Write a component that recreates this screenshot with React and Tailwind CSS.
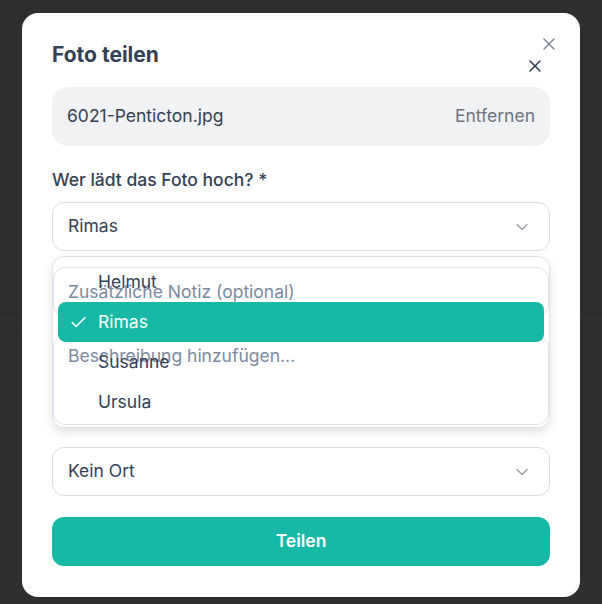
import { X, ChevronDown, Check } from 'lucide-react';

const people = ['Helmut', 'Rimas', 'Susanne', 'Ursula'];

function SelectBox({ value }) {
  return (
    <div className="h-[49px] flex items-center justify-between pl-[15px] pr-[17px] border border-[#dcdde3] rounded-xl bg-white text-[17.5px] text-[#334155]">
      <span>{value}</span>
      <ChevronDown size={20} strokeWidth={1.6} className="text-[#9aa1ad]" />
    </div>
  );
}

export default function App() {
  const selected = 'Rimas';

  return (
    <div
      className="relative w-[602px] h-[604px] bg-[#2f2f2f] overflow-hidden"
      style={{ fontFamily: 'Inter, "Noto Sans", sans-serif' }}
    >
      {/* faint backdrop rows */}
      <div className="absolute inset-x-0 top-[313px] h-px bg-[#2a2a2a]" />
      <div className="absolute inset-x-0 top-[335px] h-px bg-[#2a2a2a]" />

      <div className="relative ml-[22px] mt-[13px] w-[558px] h-[584px] bg-white rounded-2xl pt-[28px] px-[30px] flex flex-col">
        <button className="absolute right-[21px] top-[21px] text-[#7b8494]">
          <X size={20} strokeWidth={1.6} />
        </button>

        <div className="flex items-center justify-between h-[28px]">
          <h2 className="text-[21px] font-bold text-[#334155] leading-7">Foto teilen</h2>
          <X size={20} strokeWidth={1.9} className="text-[#334155] mt-[22px] mr-[5px]" />
        </div>

        <div className="mt-[18px] h-[59px] bg-[#f1f2f4] rounded-2xl flex items-center justify-between px-[15px] text-[17.5px]">
          <span className="text-[#374151]">6021-Penticton.jpg</span>
          <span className="text-[#6b7280]">Entfernen</span>
        </div>

        <label className="mt-[22px] text-[17.5px] font-medium text-[#334155] leading-6">Wer lädt das Foto hoch? *</label>

        <div className="mt-[10px]">
          <SelectBox value={selected} />
        </div>

        {/* note field, partly covered by the open list */}
        <div className="relative h-[196px] flex flex-col">
          <div className="mt-[16px] mx-px h-[50px] border border-[#e2e3e8] rounded-xl pl-[14px] pt-[11px] text-[17.5px] text-[#7b8aa1]">
            Zusätzliche Notiz (optional)
          </div>
          <div className="mt-[18px] mx-px h-[90px] border border-[#e2e3e8] rounded-xl pl-[14px] pt-[7px] text-[17.5px] text-[#7b8aa1]">
            Beschreibung hinzufügen...
          </div>

          <div className="absolute left-0 right-0 top-[5px] h-[172px] border border-[#e0e1e6] rounded-xl shadow-[0_4px_10px_rgba(0,0,0,0.12)] p-[5px]">
            {people.map((name) => {
              const active = name === selected;
              return (
                <div
                  key={name}
                  className={`h-[40px] flex items-center rounded-lg text-[17.5px] ${active ? 'bg-[#17b8a6] text-white' : 'text-[#334155]'}`}
                >
                  <span className="w-[40px] flex justify-center">
                    {active && <Check size={19} strokeWidth={2} />}
                  </span>
                  <span>{name}</span>
                </div>
              );
            })}
          </div>
        </div>

        <SelectBox value="Kein Ort" />

        <button className="mt-[21px] h-[49px] rounded-xl bg-[#17b8a6] text-white text-[17.5px] font-semibold">
          Teilen
        </button>
      </div>
    </div>
  );
}
